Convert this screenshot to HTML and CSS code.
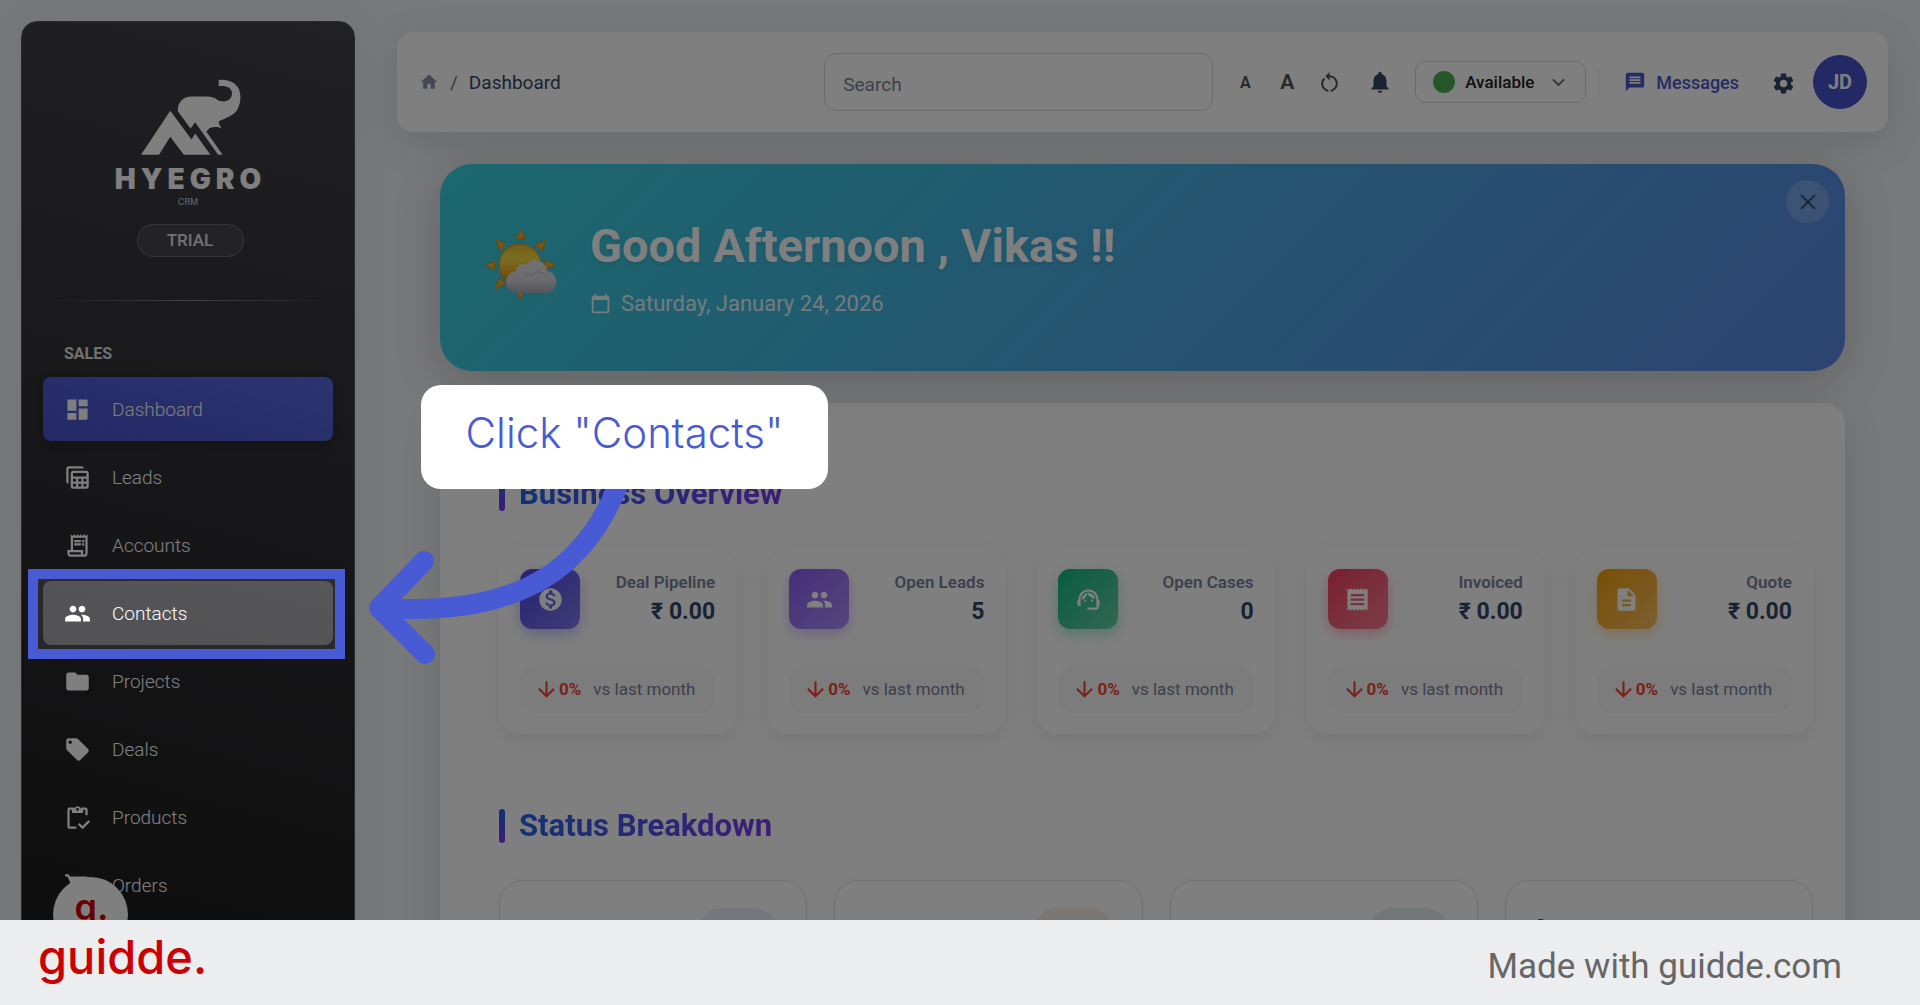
FILE: index.html
```html
<!DOCTYPE html>
<html lang="en">

<head>
    <meta charset="utf-8">
    <title>Hyegro CRM - Dashboard</title>
    <link rel="stylesheet" href="styles.css">
</head>

<body>
    <!-- icon set -->
    <svg class="icon-set" aria-hidden="true">
        <symbol id="i-dashboard" viewBox="0 0 24 24"><path d="M4 3h7v10H3V4a1 1 0 0 1 1-1zM3 15h8v6H4a1 1 0 0 1-1-1zM13 11h8v9a1 1 0 0 1-1 1h-7zM13 3h7a1 1 0 0 1 1 1v5h-8z"/></symbol>
        <symbol id="i-leads" viewBox="0 0 24 24"><path fill-rule="evenodd" d="M4 17.500c-1.100 0-2-.9-2-2V4c0-1.100.9-2 2-2h12c1.100 0 1.500.9 1.500 2H4zM20 6H8c-1.100 0-2 .9-2 2v12c0 1.100.9 2 2 2h12c1.100 0 2-.9 2-2V8c0-1.100-.9-2-2-2zM8 8h12v3H8zM8 13h2.700v2.500H8zM12.700 13h2.700v2.500h-2.700zM17.300 13H20v2.500h-2.700zM8 17.500h2.700V20H8zM12.700 17.500h2.700V20h-2.700zM17.300 17.500H20V20h-2.700z"/></symbol>
        <symbol id="i-accounts" viewBox="0 0 24 24"><path d="M19.500 3.500L18 2l-1.500 1.500L15 2l-1.500 1.500L12 2l-1.500 1.500L9 2 7.500 3.500 6 2v14H3v3c0 1.660 1.340 3 3 3h12c1.660 0 3-1.340 3-3V2zM15 20H6c-.55 0-1-.45-1-1v-1h10zm4-1c0 .55-.45 1-1 1s-1-.45-1-1v-3H8V5h11zM9 7h6v2H9zM16 7h2v2h-2zM9 10h6v2H9zM16 10h2v2h-2z"/></symbol>
        <symbol id="i-people" viewBox="0 0 24 24"><path d="M16 11c1.660 0 2.990-1.340 2.990-3S17.660 5 16 5s-3 1.340-3 3 1.340 3 3 3zm-8 0c1.660 0 2.990-1.340 2.990-3S9.660 5 8 5 5 6.340 5 8s1.340 3 3 3zm0 2c-2.330 0-7 1.170-7 3.500V19h14v-2.500c0-2.330-4.670-3.500-7-3.500zm8 0c-.29 0-.62.02-.97.05 1.160.84 1.970 1.970 1.970 3.450V19h6v-2.500c0-2.330-4.670-3.500-7-3.500z"/></symbol>
        <symbol id="i-folder" viewBox="0 0 24 24"><path d="M10 4H4c-1.100 0-1.990.9-1.990 2L2 18c0 1.100.9 2 2 2h16c1.100 0 2-.9 2-2V8c0-1.100-.9-2-2-2h-8z"/></symbol>
        <symbol id="i-tag" viewBox="0 0 24 24"><path d="M21.410 11.580l-9-9C12.050 2.220 11.550 2 11 2H4c-1.100 0-2 .9-2 2v7c0 .55.22 1.050.59 1.420l9 9c.36.36.86.58 1.410.58s1.050-.22 1.410-.59l7-7c.37-.36.59-.86.59-1.410s-.23-1.060-.59-1.420zM5.500 7C4.670 7 4 6.330 4 5.500S4.670 4 5.500 4 7 4.670 7 5.500 6.330 7 5.500 7z"/></symbol>
        <symbol id="i-products" viewBox="0 0 24 24"><path fill="none" stroke="currentColor" stroke-width="2" d="M9 4H5a1 1 0 0 0-1 1v15a1 1 0 0 0 1 1h6M15 4h4a1 1 0 0 1 1 1v5M13 17.500l3.500 3.500 6-6"/><path fill-rule="evenodd" d="M7 4h2.200a3 3 0 0 1 5.600 0H17v4H7zM12 3.600a1.200 1.200 0 1 0 0 2.400 1.200 1.200 0 0 0 0-2.400z"/></symbol>
        <symbol id="i-cart" viewBox="0 0 24 24"><path d="M7 18c-1.100 0-2 .9-2 2s.9 2 2 2 2-.9 2-2-.9-2-2-2zM1 2v2h2l3.600 7.590-1.350 2.450C4.500 15.400 5.500 17 7 17h12v-2H7.420l1.100-2h7.030c.75 0 1.410-.41 1.750-1.030l3.580-6.490C21.250 4.820 20.760 4 20 4H5.210l-.94-2zM17 18c-1.100 0-2 .9-2 2s.9 2 2 2 2-.9 2-2-.9-2-2-2z"/></symbol>
        <symbol id="i-home" viewBox="0 0 24 24"><path d="M10 20v-6h4v6h5v-8h3L12 3 2 12h3v8z"/></symbol>
        <symbol id="i-reset" viewBox="0 0 24 24"><path d="M12 5V2L8 6l4 4V7c3.310 0 6 2.690 6 6 0 2.970-2.170 5.430-5 5.910v2.020c3.950-.49 7-3.850 7-7.930 0-4.420-3.580-8-8-8zM6 13c0-1.650.67-3.150 1.760-4.240L6.340 7.340C4.900 8.790 4 10.790 4 13c0 4.080 3.050 7.440 7 7.930v-2.020c-2.830-.48-5-2.940-5-5.910z"/></symbol>
        <symbol id="i-bell" viewBox="0 0 24 24"><path d="M12 22c1.100 0 2-.9 2-2h-4c0 1.100.89 2 2 2zm6-6v-5c0-3.070-1.640-5.640-4.500-6.320V4c0-.83-.67-1.500-1.500-1.500s-1.500.67-1.500 1.500v.68C7.630 5.360 6 7.920 6 11v5l-2 2v1h16v-1z"/></symbol>
        <symbol id="i-chevron" viewBox="0 0 24 24"><path fill="none" stroke="currentColor" stroke-width="3" d="M3 7l9 9 9-9"/></symbol>
        <symbol id="i-message" viewBox="0 0 24 24"><path d="M20 2H4c-1.100 0-1.990.9-1.990 2L2 22l4-4h14c1.100 0 2-.9 2-2V4c0-1.100-.9-2-2-2zm-2 12H6v-2h12zm0-3H6V9h12zm0-3H6V6h12z"/></symbol>
        <symbol id="i-gear" viewBox="0 0 24 24"><path d="M19.140 12.940c.04-.3.06-.61.06-.94 0-.32-.02-.64-.07-.94l2.030-1.580c.18-.14.23-.41.12-.61l-1.920-3.320c-.12-.22-.37-.29-.59-.22l-2.390.96c-.5-.38-1.030-.7-1.620-.94l-.36-2.540c-.04-.24-.24-.41-.48-.41h-3.840c-.24 0-.43.17-.47.41l-.36 2.540c-.59.24-1.130.57-1.620.94l-2.390-.96c-.22-.08-.47 0-.59.22L2.740 8.870c-.12.21-.08.47.12.61l2.030 1.580c-.05.3-.09.63-.09.94s.02.64.07.94l-2.030 1.580c-.18.14-.23.41-.12.61l1.920 3.320c.12.22.37.29.59.22l2.390-.96c.5.38 1.030.7 1.620.94l.36 2.540c.05.24.24.41.48.41h3.840c.24 0 .44-.17.47-.41l.36-2.540c.59-.24 1.130-.56 1.620-.94l2.390.96c.22.08.47 0 .59-.22l1.920-3.320c.12-.22.07-.47-.12-.61zM12 15.600c-1.980 0-3.600-1.620-3.600-3.600s1.620-3.600 3.600-3.600 3.600 1.620 3.600 3.600-1.620 3.600-3.600 3.600z"/></symbol>
        <symbol id="i-close" viewBox="0 0 24 24"><path fill="none" stroke="currentColor" stroke-width="2" stroke-linecap="round" d="M5 5l14 14M19 5L5 19"/></symbol>
        <symbol id="i-calendar" viewBox="0 0 24 24"><path d="M20 3h-1V1h-2v2H7V1H5v2H4c-1.100 0-2 .9-2 2v16c0 1.100.9 2 2 2h16c1.100 0 2-.9 2-2V5c0-1.100-.9-2-2-2zm0 18H4V8h16z"/></symbol>
        <symbol id="i-dollar" viewBox="0 0 24 24"><path d="M12 2C6.480 2 2 6.480 2 12s4.480 10 10 10 10-4.480 10-10S17.520 2 12 2zm1.410 16.090V20h-2.670v-1.930c-1.710-.36-3.160-1.460-3.270-3.400h1.960c.1 1.050.82 1.870 2.650 1.870 1.960 0 2.400-.98 2.400-1.590 0-.83-.44-1.610-2.670-2.140-2.480-.6-4.180-1.620-4.180-3.670 0-1.720 1.390-2.840 3.110-3.210V4h2.670v1.950c1.860.45 2.790 1.860 2.850 3.390H14.300c-.05-1.110-.64-1.870-2.220-1.870-1.500 0-2.400.68-2.400 1.640 0 .84.65 1.390 2.670 1.910s4.180 1.390 4.180 3.910c-.01 1.830-1.380 2.830-3.120 3.160z"/></symbol>
        <symbol id="i-agent" viewBox="0 0 24 24"><path d="M21 12.220C21 6.730 16.740 3 12 3c-4.690 0-9 3.650-9 9.280-.6.34-1 .98-1 1.720v2c0 1.100.9 2 2 2h1v-6.100c0-3.870 3.130-7 7-7s7 3.130 7 7V19h-8v2h8c1.100 0 2-.9 2-2v-1.220c.59-.31 1-.92 1-1.640v-2.300c0-.7-.41-1.310-1-1.620z"/><circle cx="9" cy="13" r="1"/><circle cx="15" cy="13" r="1"/><path d="M18 11.030C17.520 8.180 15.040 6 12.050 6c-3.030 0-6.290 2.510-6.030 6.450 2.470-1.010 4.330-3.210 4.860-5.890 1.310 2.630 4 4.440 7.120 4.470z"/></symbol>
        <symbol id="i-receipt" viewBox="0 0 24 24"><path d="M18 17H6v-2h12zm0-4H6v-2h12zm0-4H6V7h12zM3 22l1.500-1.500L6 22l1.500-1.500L9 22l1.500-1.500L12 22l1.500-1.500L15 22l1.500-1.500L18 22l1.500-1.500L21 22V2l-1.500 1.500L18 2l-1.500 1.500L15 2l-1.500 1.500L12 2l-1.500 1.500L9 2 7.500 3.500 6 2 4.500 3.500 3 2z"/></symbol>
        <symbol id="i-doc" viewBox="0 0 24 24"><path d="M14 2H6c-1.100 0-1.990.9-1.990 2L4 20c0 1.100.89 2 1.990 2H18c1.100 0 2-.9 2-2V8zm2 16H8v-2h8zm0-4H8v-2h8zm-3-5V3.500L18.500 9z"/></symbol>
        <symbol id="i-down" viewBox="0 0 24 24"><path d="M20 12l-1.410-1.410L13 16.170V4h-2v12.170l-5.580-5.590L4 12l8 8z"/></symbol>
    </svg>

    <div class="app">
        <aside class="sidebar">
            <div class="brand">
                <svg class="brand-mark" viewBox="420 236 310 232" aria-hidden="true">
                    <path d="M511 332L575 418 586 400 632 464H552L511 410 477 464H423z"/>
                    <path d="M534 333C532 307 550 289 575 289H620C636 289 645 293 655 300C663 304 674 305 684 301C696 295 699 283 696 273C691 259 674 256 657 258V239C686 236 708 247 718 267C725 285 724 303 716 322C707 345 681 353 657 363C657 373 662 378 667 385C647 378 629 379 620 395L669 464H655L586 366 572 385z"/>
                </svg>
                <div class="brand-name">HYEGRO</div>
                <div class="brand-sub">CRM</div>
                <div class="plan">TRIAL</div>
            </div>
            <hr class="divider">
            <h6 class="nav-title">SALES</h6>
            <nav class="nav">
                <a class="nav-link active" href="#"><svg><use href="#i-dashboard"/></svg>Dashboard</a>
                <a class="nav-link" href="#"><svg><use href="#i-leads"/></svg>Leads</a>
                <a class="nav-link" href="#"><svg><use href="#i-accounts"/></svg>Accounts</a>
                <a class="nav-link hovered" href="#"><svg><use href="#i-people"/></svg>Contacts</a>
                <a class="nav-link" href="#"><svg><use href="#i-folder"/></svg>Projects</a>
                <a class="nav-link" href="#"><svg><use href="#i-tag"/></svg>Deals</a>
                <a class="nav-link" href="#"><svg><use href="#i-products"/></svg>Products</a>
                <a class="nav-link" href="#"><svg><use href="#i-cart"/></svg>Orders</a>
            </nav>
        </aside>

        <main class="main">
            <header class="topbar">
                <div class="breadcrumb">
                    <a href="#" aria-label="Home"><svg><use href="#i-home"/></svg></a>
                    <span class="slash">/</span>
                    <span>Dashboard</span>
                </div>
                <input class="search" type="text" placeholder="Search" aria-label="Search">
                <div class="actions">
                    <button class="tool small" type="button">A</button>
                    <button class="tool big" type="button">A</button>
                    <button class="tool" type="button" aria-label="Reset"><svg><use href="#i-reset"/></svg></button>
                    <button class="bell" type="button" aria-label="Notifications"><svg><use href="#i-bell"/></svg></button>
                    <label class="status">
                        <span class="dot"></span>
                        <select aria-label="Status">
                            <option>Available</option>
                        </select>
                        <svg><use href="#i-chevron"/></svg>
                    </label>
                    <span class="line"></span>
                    <a class="messages" href="#"><svg><use href="#i-message"/></svg>Messages</a>
                    <button class="gear" type="button" aria-label="Settings"><svg><use href="#i-gear"/></svg></button>
                    <button class="avatar" type="button">JD</button>
                </div>
            </header>

            <div class="content">
                <section class="banner">
                    <svg class="weather" viewBox="0 0 73 73" aria-hidden="true">
                        <defs>
                            <linearGradient id="sun" x1="0" y1="0" x2="0" y2="1"><stop offset="0" stop-color="#e8b82c"/><stop offset=".35" stop-color="#f5dd45"/><stop offset="1" stop-color="#e07a00"/></linearGradient>
                            <linearGradient id="cloud" x1="0" y1="0" x2="0" y2="1"><stop offset="0" stop-color="#e4e4e8"/><stop offset=".6" stop-color="#d6d6da"/><stop offset="1" stop-color="#a4a9b8"/></linearGradient>
                        </defs>
                        <g fill="#e9b52d" stroke="#d8871c">
                            <path d="M37 1l4 10h-9zM62 12l-4 11-7-6zM12 11l10 5-6 7zM1 37l10-4v9zM72 37l-11 4v-9zM11 61l4-11 7 6zM36 72l-4-10h9z"/>
                        </g>
                        <circle cx="36" cy="37" r="21" fill="url(#sun)" stroke="#d88a1a"/>
                        <path fill="url(#cloud)" d="M34 65a11 11 0 0 1-2-22c0-6 6-8 10-6 4-7 19-7 21 6 12 1 13 20 0 22z"/>
                        <path fill="none" stroke="#b4b6c0" d="M40 49c1-3 5-4 8-1 2-5 9-5 13-2"/>
                    </svg>
                    <div>
                        <h1>Good Afternoon , Vikas !!</h1>
                        <p class="date"><svg><use href="#i-calendar"/></svg>Saturday, January 24, 2026</p>
                    </div>
                    <button class="close" type="button" aria-label="Close"><svg><use href="#i-close"/></svg></button>
                </section>

                <section class="panel">
                    <h2 class="section-title"><span>Business Overview</span></h2>
                    <div class="stats">
                        <div class="stat">
                            <div class="stat-top">
                                <div class="tile indigo"><svg><use href="#i-dollar"/></svg></div>
                                <div><div class="stat-label">Deal Pipeline</div><div class="stat-value">₹ 0.00</div></div>
                            </div>
                            <div class="trend"><svg><use href="#i-down"/></svg><b>0%</b><span>vs last month</span></div>
                        </div>
                        <div class="stat">
                            <div class="stat-top">
                                <div class="tile purple"><svg><use href="#i-people"/></svg></div>
                                <div><div class="stat-label">Open Leads</div><div class="stat-value">5</div></div>
                            </div>
                            <div class="trend"><svg><use href="#i-down"/></svg><b>0%</b><span>vs last month</span></div>
                        </div>
                        <div class="stat">
                            <div class="stat-top">
                                <div class="tile green"><svg><use href="#i-agent"/></svg></div>
                                <div><div class="stat-label">Open Cases</div><div class="stat-value">0</div></div>
                            </div>
                            <div class="trend"><svg><use href="#i-down"/></svg><b>0%</b><span>vs last month</span></div>
                        </div>
                        <div class="stat">
                            <div class="stat-top">
                                <div class="tile red"><svg><use href="#i-receipt"/></svg></div>
                                <div><div class="stat-label">Invoiced</div><div class="stat-value">₹ 0.00</div></div>
                            </div>
                            <div class="trend"><svg><use href="#i-down"/></svg><b>0%</b><span>vs last month</span></div>
                        </div>
                        <div class="stat">
                            <div class="stat-top">
                                <div class="tile orange"><svg><use href="#i-doc"/></svg></div>
                                <div><div class="stat-label">Quote</div><div class="stat-value">₹ 0.00</div></div>
                            </div>
                            <div class="trend"><svg><use href="#i-down"/></svg><b>0%</b><span>vs last month</span></div>
                        </div>
                    </div>

                    <h2 class="section-title"><span>Status Breakdown</span></h2>
                    <div class="breakdown">
                        <div class="box"><div class="blob lilac"></div></div>
                        <div class="box"><div class="blob peach"></div></div>
                        <div class="box"><div class="blob mint"></div></div>
                        <div class="box"><h3>Customers</h3></div>
                    </div>
                </section>
            </div>
        </main>
        <div class="fab">g.</div>
    </div>

    <!-- guide step -->
    <div class="guide">
        <div class="highlight"></div>
        <svg class="arrow" viewBox="360 480 280 190" aria-hidden="true">
            <path d="M620 480C590 560 530 617 385 608M424 561L379 608 425 654"/>
        </svg>
        <div class="callout">Click "Contacts"</div>
    </div>

    <footer class="footer">
        <div class="footer-logo">guidde.</div>
        <div class="footer-text">Made with guidde.com</div>
    </footer>
</body>

</html>
```

FILE: styles.css
```css
* {
    box-sizing: border-box;
}

body {
    margin: 0;
    height: 100vh;
    overflow: hidden;
    font-family: Roboto, "Liberation Sans", sans-serif;
    background-color: #f0f2f5;
    color: #344767;
}

h1, h2, h3, h6, p {
    margin: 0;
}

a {
    color: inherit;
    text-decoration: none;
}

button {
    border: none;
    background: none;
    padding: 0;
    font-family: inherit;
    color: inherit;
}

svg {
    display: block;
    flex: none;
    fill: currentColor;
}

.icon-set {
    position: absolute;
    width: 0;
    height: 0;
}

.app {
    display: flex;
    height: 100vh;
    overflow: hidden;
}

/* Sidebar */
.sidebar {
    flex: none;
    width: 334px;
    height: 1200px;
    margin: 21px 0 0 21px;
    padding: 57px 21px 0;
    border: 1px solid #55555c;
    border-radius: 16px;
    background-image: linear-gradient(195deg, #42424a, #191919 85%);
    box-shadow: 0 0 40px rgba(0, 0, 0, 0.06);
    color: #fff;
}

.brand {
    display: flex;
    flex-direction: column;
    align-items: center;
}

.brand-mark {
    width: 103px;
    height: 77px;
    margin-left: 6px;
}

.brand-name {
    margin: 6px 0 0 5px;
    font-family: Inter, "Liberation Sans", sans-serif;
    font-size: 28px;
    font-weight: 900;
    line-height: 34px;
    letter-spacing: 5px;
}

.brand-sub {
    font-family: Inter, "Liberation Sans", sans-serif;
    font-size: 9px;
    line-height: 12px;
    color: #d0d0d0;
}

.plan {
    width: 107px;
    margin: 16px 0 0 4px;
    border: 1px solid rgba(255, 255, 255, 0.2);
    border-radius: 17px;
    background-color: rgba(255, 255, 255, 0.08);
    font-size: 17px;
    font-weight: 500;
    line-height: 31px;
    text-align: center;
    color: #e4e4e4;
}

.divider {
    height: 1px;
    margin: 43px 0 41px;
    border: none;
    background-image: linear-gradient(90deg, transparent, rgba(255, 255, 255, 0.4), transparent);
}

.nav-title {
    padding-left: 21px;
    font-size: 16px;
    font-weight: 700;
    line-height: 24px;
    color: #e2e2e2;
}

.nav {
    display: flex;
    flex-direction: column;
    gap: 4px;
    margin-top: 11px;
}

.nav-link {
    display: flex;
    align-items: center;
    gap: 21px;
    height: 64px;
    padding-left: 21px;
    border-radius: 8px;
    font-size: 19px;
    font-weight: 300;
}

.nav-link svg {
    width: 27px;
    height: 27px;
}

.nav-link.active {
    background-image: linear-gradient(195deg, #5869e2, #4653cb);
    box-shadow: 0 4px 12px rgba(0, 0, 0, 0.2);
}

.nav-link.hovered {
    background-color: rgba(255, 255, 255, 0.2);
}

/* Main column */
.main {
    flex: 1;
    min-width: 0;
    padding: 32px 32px 0 42px;
}

.topbar {
    position: relative;
    display: flex;
    align-items: center;
    height: 100px;
    padding: 0 21px 0 22px;
    border-radius: 16px;
    background-color: #fff;
    box-shadow: 0 10px 40px rgba(0, 0, 0, 0.12);
}

.breadcrumb {
    display: flex;
    flex: 1;
    align-items: center;
    gap: 11px;
    font-size: 19px;
}

.breadcrumb svg {
    width: 20px;
    height: 20px;
    color: #8a90a8;
}

.slash {
    color: #6c757d;
}

.search {
    width: 389px;
    height: 58px;
    padding: 4px 18px 0;
    border: 1px solid #d2d6da;
    border-radius: 12px;
    background: none;
    font-family: inherit;
    font-size: 19px;
}

.search::placeholder {
    color: #7b809a;
    opacity: 1;
}

.actions {
    display: flex;
    align-items: center;
    padding-left: 11px;
}

.tool {
    display: flex;
    justify-content: center;
    width: 42px;
    font-weight: 700;
    color: #555;
}

.tool.small {
    font-size: 16px;
}

.tool.big {
    font-size: 21px;
}

.tool svg,
.gear svg {
    width: 25px;
    height: 25px;
}

.bell {
    margin-left: 17px;
}

.bell svg {
    width: 26px;
    height: 26px;
}

.status {
    display: flex;
    align-items: center;
    width: 171px;
    height: 42px;
    margin-left: 22px;
    padding-left: 17px;
    border: 1px solid #d2d6da;
    border-radius: 10px;
}

.dot {
    width: 22px;
    height: 22px;
    border-radius: 50%;
    background-color: #4caf50;
}

.status select {
    width: 86px;
    padding: 0;
    border: none;
    margin-left: 10px;
    appearance: none;
    background: none;
    font-family: inherit;
    font-size: 17px;
    font-weight: 500;
    color: #212121;
}

.status svg {
    width: 15px;
    height: 15px;
    color: #666;
}

.line {
    width: 1px;
    height: 26px;
    margin-left: 13px;
    background-color: #f0f0f0;
}

.messages {
    display: flex;
    align-items: center;
    gap: 10px;
    margin-left: 24px;
    font-size: 18px;
    font-weight: 500;
    color: #4a56cc;
}

.messages svg {
    width: 22px;
    height: 22px;
}

.gear {
    margin: 2px 0 0 32px;
}

.avatar {
    width: 54px;
    height: 54px;
    margin-left: 17px;
    border-radius: 50%;
    background-color: #4653cb;
    font-size: 20px;
    font-weight: 700;
    color: #fff;
}

.content {
    padding: 32px 43px 0;
}

/* Greeting banner */
.banner {
    position: relative;
    display: flex;
    align-items: center;
    gap: 33px;
    height: 207px;
    padding: 0 44px;
    border-radius: 32px;
    background-image: linear-gradient(135deg, #36d1dc, #5b86e5);
    box-shadow: 0 10px 48px rgba(0, 0, 0, 0.2);
    color: #fff;
}

.weather {
    width: 73px;
    height: 73px;
    margin-top: -6px;
}

.banner h1 {
    font-size: 47px;
    font-weight: 700;
    line-height: 58px;
    text-shadow: 0 2px 4px rgba(0, 0, 0, 0.1);
}

.date {
    display: flex;
    align-items: center;
    gap: 10px;
    margin: 16px 0 2px;
    font-size: 22px;
    line-height: 26px;
    color: rgba(255, 255, 255, 0.9);
}

.date svg {
    width: 21px;
    height: 21px;
}

.close {
    position: absolute;
    top: 16px;
    right: 16px;
    display: flex;
    align-items: center;
    justify-content: center;
    width: 43px;
    height: 43px;
    border-radius: 50%;
    background-color: rgba(255, 255, 255, 0.2);
    color: #344767;
}

.close svg {
    width: 22px;
    height: 22px;
}

/* Overview panel */
.panel {
    height: 900px;
    margin-top: 32px;
    padding: 74px 32px 0 59px;
    border-radius: 21px;
    background-color: #fff;
    box-shadow: 0 10px 40px rgba(0, 0, 0, 0.12);
}

.section-title {
    display: flex;
    gap: 14px;
    font-size: 31px;
    font-weight: 700;
    line-height: 34px;
}

.section-title::before {
    content: "";
    width: 6px;
    border-radius: 4px;
    background-image: linear-gradient(#2563eb, #7c3aed);
}

.section-title span {
    background-image: linear-gradient(90deg, #2563eb, #7c3aed);
    background-clip: text;
    -webkit-background-clip: text;
    color: transparent;
}

.stats {
    display: grid;
    grid-template-columns: repeat(5, 1fr);
    gap: 32px;
    margin: 37px 0 75px;
}

.stat {
    padding: 21px;
    border-radius: 21px;
    background-color: #fff;
    box-shadow: 0 8px 26px rgba(0, 0, 0, 0.08);
}

.stat-top {
    display: flex;
    justify-content: space-between;
    height: 96px;
    text-align: right;
}

.stat-label {
    margin-top: 2px;
    font-size: 17px;
    font-weight: 600;
    line-height: 22px;
    color: #7b809a;
}

.stat-value {
    margin-top: 4px;
    font-size: 23px;
    font-weight: 700;
    line-height: 30px;
}

.tile {
    display: flex;
    align-items: center;
    justify-content: center;
    width: 60px;
    height: 60px;
    border-radius: 12px;
    color: #fff;
}

.tile svg {
    width: 27px;
    height: 27px;
}

.tile.indigo {
    background-image: linear-gradient(135deg, #4f46e5, #8079ec);
    box-shadow: 0 5px 14px rgba(79, 70, 229, 0.35);
}

.tile.purple {
    background-image: linear-gradient(135deg, #8b5cf6, #ad8df8);
    box-shadow: 0 5px 14px rgba(139, 92, 246, 0.35);
}

.tile.green {
    background-image: linear-gradient(135deg, #10b981, #68cea9);
    box-shadow: 0 5px 14px rgba(16, 185, 129, 0.35);
}

.tile.red {
    background-image: linear-gradient(135deg, #f43f5e, #f47e92);
    box-shadow: 0 5px 14px rgba(244, 63, 94, 0.35);
}

.tile.orange {
    background-image: linear-gradient(135deg, #f59e0b, #f6be62);
    box-shadow: 0 5px 14px rgba(245, 158, 11, 0.35);
}

.trend {
    display: flex;
    align-items: center;
    height: 48px;
    padding: 0 14px;
    border-radius: 16px;
    background-color: #f8f8f9;
    font-size: 17px;
    white-space: nowrap;
    color: #7b809a;
}

.trend svg {
    width: 25px;
    height: 25px;
}

.trend b,
.trend svg {
    color: #f44335;
}

.trend b {
    font-weight: 700;
}

.trend span {
    margin-left: 12px;
}

.breakdown {
    display: grid;
    grid-template-columns: repeat(4, 1fr);
    gap: 27px;
    margin-top: 37px;
}

.box {
    height: 240px;
    padding: 27px 28px;
    border: 1px solid #e0e0e3;
    border-radius: 24px;
    box-shadow: 0 4px 20px rgba(0, 0, 0, 0.04);
}

.box h3 {
    margin-top: 5px;
    font-size: 20px;
    font-weight: 700;
    line-height: 28px;
}

.blob {
    width: 80px;
    height: 80px;
    margin-left: auto;
    border-radius: 24px;
}

.lilac {
    background-color: #ececff;
}

.peach {
    background-color: #fbeee6;
}

.mint {
    background-color: #e4f1ed;
}

.fab {
    position: absolute;
    left: 53px;
    bottom: 53px;
    width: 75px;
    height: 75px;
    padding-left: 2px;
    border-radius: 50%;
    background-color: #fff;
    font-family: Inter, "Liberation Sans", sans-serif;
    font-size: 36px;
    font-weight: 600;
    line-height: 60px;
    text-align: center;
    color: #c00;
}

/* Guide step: everything outside the highlight is dimmed */
.highlight {
    position: absolute;
    top: 569px;
    left: 28px;
    width: 317px;
    height: 90px;
    border: 10px solid #485ad4;
    box-shadow: 0 0 0 2000px rgba(0, 0, 0, 0.5);
}

.arrow {
    position: absolute;
    top: 480px;
    left: 360px;
    width: 280px;
    height: 190px;
}

.arrow path {
    fill: none;
    stroke: #485ad4;
    stroke-width: 20;
    stroke-linecap: round;
    stroke-linejoin: round;
}

.callout {
    position: absolute;
    top: 385px;
    left: 421px;
    width: 407px;
    height: 104px;
    border-radius: 20px;
    background-color: #fff;
    font-family: Inter, "Liberation Sans", sans-serif;
    font-size: 42px;
    font-weight: 300;
    line-height: 96px;
    text-align: center;
    color: #485ad4;
}

.footer {
    position: fixed;
    right: 0;
    bottom: 0;
    left: 0;
    display: flex;
    align-items: center;
    justify-content: space-between;
    height: 85px;
    padding: 0 78px 0 38px;
    background-color: #ecedef;
}

.footer-logo {
    font-family: Inter, "Liberation Sans", sans-serif;
    font-size: 47px;
    font-weight: 500;
    line-height: 56px;
    margin-bottom: 12px;
    color: #c00;
}

.footer-text {
    margin-top: 8px;
    font-size: 35px;
    line-height: 42px;
    color: #666;
}
```
